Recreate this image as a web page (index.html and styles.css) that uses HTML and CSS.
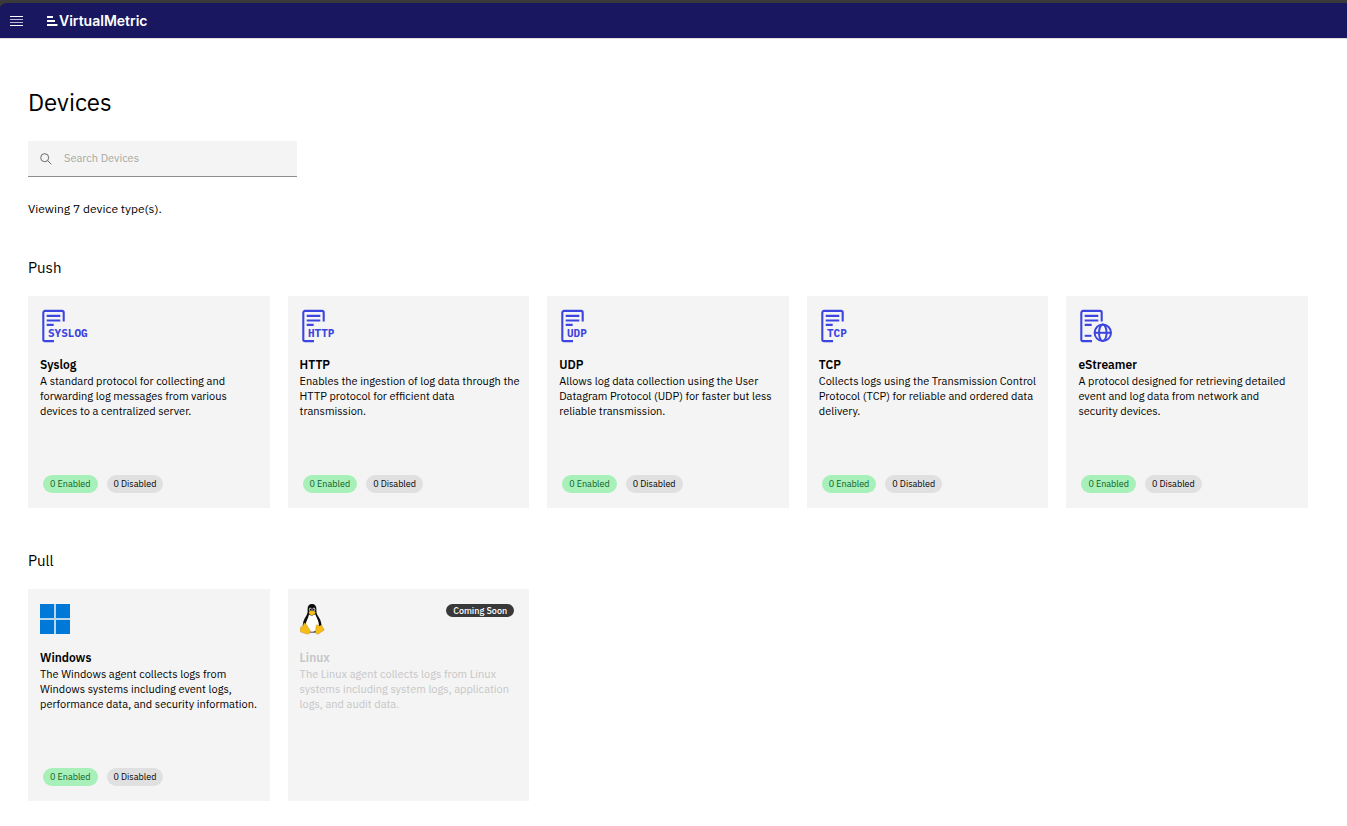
FILE: index.html
```html
<!DOCTYPE html>
<html lang="en">
<head>
<meta charset="utf-8">
<title>Devices</title>
<link rel="stylesheet" href="styles.css">
</head>
<body>
<svg class="defs" width="0" height="0" aria-hidden="true">
  <symbol id="doc" viewBox="0 0 50 36">
    <path d="M23.7 13.5V4.6a1.7 1.7 0 0 0-1.7-1.7H5A1.7 1.7 0 0 0 3.3 4.6v26.8A1.7 1.7 0 0 0 5 33.1h9M6.7 7.9h13.6M6.7 12.5h13.6M6.7 16.9h7" fill="none" stroke="#3d45e0" stroke-width="2.1"/>
  </symbol>
</svg>
<header class="topbar">
  <button class="menu" aria-label="Menu">
    <svg width="13" height="10" viewBox="0 0 13 10"><path d="M0 .5h13M0 9.5h13" stroke="#fff"/><path d="M0 3.5h13M0 6.5h13" stroke="#b9b8d8"/></svg>
  </button>
  <a class="brand" href="#">
    <svg width="11" height="10" viewBox="0 0 11 10"><path d="M0 1h6M0 5h8M0 9h10.5" stroke="#fff" stroke-width="1.8"/></svg>
    <span>VirtualMetric</span>
  </a>
</header>
<main class="page">
  <h1>Devices</h1>
  <label class="search">
    <svg width="12" height="12" viewBox="0 0 12 12" fill="none" stroke="#6a6a6a"><circle cx="4.7" cy="4.7" r="4"/><path d="M7.6 7.6 11.3 11.3"/></svg>
    <input type="text" placeholder="Search Devices" aria-label="Search Devices">
  </label>
  <p class="count">Viewing 7 device type(s).</p>

  <h2>Push</h2>
  <section class="grid">
    <article class="card">
      <svg class="icon" viewBox="0 0 50 36"><use href="#doc"/><text x="8" y="29">SYSLOG</text></svg>
      <h3>Syslog</h3>
      <p>A standard protocol for collecting and forwarding log messages from various devices to a centralized server.</p>
      <div class="tags"><span class="tag on">0 Enabled</span><span class="tag">0 Disabled</span></div>
    </article>
    <article class="card">
      <svg class="icon" viewBox="0 0 50 36"><use href="#doc"/><text x="8" y="29">HTTP</text></svg>
      <h3>HTTP</h3>
      <p>Enables the ingestion of log data through the HTTP protocol for efficient data transmission.</p>
      <div class="tags"><span class="tag on">0 Enabled</span><span class="tag">0 Disabled</span></div>
    </article>
    <article class="card">
      <svg class="icon" viewBox="0 0 50 36"><use href="#doc"/><text x="8" y="29">UDP</text></svg>
      <h3>UDP</h3>
      <p>Allows log data collection using the User Datagram Protocol (UDP) for faster but less reliable transmission.</p>
      <div class="tags"><span class="tag on">0 Enabled</span><span class="tag">0 Disabled</span></div>
    </article>
    <article class="card">
      <svg class="icon" viewBox="0 0 50 36"><use href="#doc"/><text x="8" y="29">TCP</text></svg>
      <h3>TCP</h3>
      <p>Collects logs using the Transmission Control Protocol (TCP) for reliable and ordered data delivery.</p>
      <div class="tags"><span class="tag on">0 Enabled</span><span class="tag">0 Disabled</span></div>
    </article>
    <article class="card">
      <svg class="icon" viewBox="0 0 50 36"><use href="#doc"/><g fill="none" stroke="#3d45e0" stroke-width="2"><path d="M6.7 27.8h6.8"/><circle cx="24.8" cy="24.8" r="8.2"/><ellipse cx="24.8" cy="24.8" rx="3.8" ry="8.2"/><path d="M16.6 24.8h16.4"/></g></svg>
      <h3>eStreamer</h3>
      <p>A protocol designed for retrieving detailed event and log data from network and security devices.</p>
      <div class="tags"><span class="tag on">0 Enabled</span><span class="tag">0 Disabled</span></div>
    </article>
  </section>

  <h2>Pull</h2>
  <section class="grid">
    <article class="card">
      <svg class="icon" viewBox="0 0 50 36"><path fill="#b9d8ee" d="M0 3h30v30H0z"/><path fill="#0078d7" d="M0 3h14v14H0zM16 3h14v14H16zM0 19h14v14H0zM16 19h14v14H16z"/></svg>
      <h3>Windows</h3>
      <p>The Windows agent collects logs from Windows systems including event logs, performance data, and security information.</p>
      <div class="tags"><span class="tag on">0 Enabled</span><span class="tag">0 Disabled</span></div>
    </article>
    <article class="card soon">
      <svg class="icon" viewBox="0 0 50 36">
        <path fill="#0b0b0b" d="M12 3c-3 0-4.500 2-4.400 5 .1 3 .2 4.500-1.600 7.200C4.200 18 3 20.500 2.800 24c0 3 2 6.500 5 7.500h8c4-1 6-4 5.700-7.500-.3-3.600-1.700-6.500-3.500-9-1.700-2.400-1.600-4-1.600-7 0-3-1.400-5-4.400-5z"/>
        <path fill="#fff" d="M9 13.500c1.500 1.500 4.500 1.300 6.200-.5 1 3.500 3.800 6.500 3.700 11-.1 4-3 6.800-6.900 6.800S5.700 28 5.600 24.500C5.500 20.500 8.400 17.500 9 13.500z"/>
        <ellipse cx="10.300" cy="8.400" rx="1.400" ry="1.900" fill="#aaa"/><ellipse cx="13.900" cy="8.400" rx="1.500" ry="2" fill="#aaa"/>
        <circle cx="10.600" cy="8.700" r=".8"/><circle cx="13.600" cy="8.700" r=".8"/>
        <path fill="#f4bd17" d="M8.800 11c1.200-1.500 4.500-2 6.700 0 .2 1.500-2 3.200-3.600 3.200S8.600 12.500 8.800 11z"/>
        <path fill="#f4bd17" stroke="#b87d08" stroke-width=".4" d="M4.500 22c2 .8 3.500 4.500 5.300 6.800 1.400 2.200-.2 4.500-2.800 4.200-2.200-.5-4-1.500-6.300-1.900-1.300-.5.200-2.200-.2-4.400.3-1.600 2.300-.6 2.700-2.300.4-1.200.4-2.200 1.300-2.400zM17 23.500c.8 2 3.400 1.700 4.300.2 1.300.3.700 2.800 2.600 4.300.8 1.300-.7 1.700-2 2.500-1.600 1-2.800 2.700-4.600 2.500-2.600-.5-2-3-1.500-5 .4-1.700.1-4 1.200-4.500z"/>
      </svg>
      <span class="badge">Coming Soon</span>
      <h3>Linux</h3>
      <p>The Linux agent collects logs from Linux systems including system logs, application logs, and audit data.</p>
    </article>
  </section>
</main>
</body>
</html>
```
FILE: styles.css
```css
* { box-sizing: border-box; }
body {
  margin: 0;
  background: #fff;
  color: #000;
  font-family: "IBM Plex Sans", Roboto, "Liberation Sans", sans-serif;
  font-size: 11px;
  line-height: 15px;
}
h1, h2, h3, p { margin: 0; }
.defs { display: block; height: 0; }

.topbar {
  display: flex;
  align-items: center;
  gap: 24px;
  height: 39px;
  padding-left: 10px;
  background: #18175f;
  border-top: 3px solid #3a3a3a;
  border-bottom: 1px solid #dedede;
  border-top-left-radius: 8px;
  box-shadow: -4px -4px 0 4px #3a3a3a;
  clip-path: inset(0);
}
.menu { display: flex; padding: 0; border: 0; background: none; }
.brand {
  display: flex;
  align-items: center;
  gap: 1px;
  color: #fff;
  text-decoration: none;
  font: 600 14px/18px Inter, "Liberation Sans", sans-serif;
}

.page { padding: 47px 39px 26px 28px; }
h1 { font-size: 24px; line-height: 32px; font-weight: 400; }
.search {
  display: flex;
  align-items: center;
  gap: 12px;
  width: 269px;
  height: 36px;
  margin-top: 23px;
  padding: 0 12px;
  background: #f4f4f4;
  border-bottom: 1px solid #8d8d8d;
}
.search input {
  flex: 1;
  min-width: 0;
  padding: 0;
  border: 0;
  outline: 0;
  background: none;
  font: inherit;
}
.search input::placeholder { color: #a8a8a0; opacity: 1; }
.count { margin-top: 24px; font-size: 12px; line-height: 16px; }
h2 { margin-top: 41px; font-size: 15px; line-height: 20px; font-weight: 400; }
.grid + h2 { margin-top: 43px; }

.grid {
  display: grid;
  grid-template-columns: repeat(5, 1fr);
  gap: 18px;
  margin-top: 18px;
}
.card {
  position: relative;
  display: flex;
  flex-direction: column;
  min-height: 212px;
  padding: 12px 8px 15px 12px;
  background: #f4f4f4;
}
.icon { display: block; width: 50px; height: 36px; }
.icon text {
  font: bold 11px "IBM Plex Mono", "Liberation Mono", monospace;
  fill: #3d45e0;
}
h3 { margin: 13px 0 1px; font-size: 12px; line-height: 16px; font-weight: 600; }
.tags { display: flex; gap: 9px; margin-top: auto; padding-left: 3px; }
.tag {
  padding: 0 7px;
  border-radius: 9px;
  background: #e0e0e0;
  font-size: 9px;
  line-height: 18px;
}
.tag.on { background: #a7f0ba; color: #0e6027; }
.soon { color: #c6c6c6; }
.badge {
  position: absolute;
  top: 15px;
  right: 15px;
  padding: 0 7px;
  border-radius: 7px;
  background: #393939;
  color: #fff;
  font-size: 9px;
  font-weight: 500;
  line-height: 13px;
}
```
